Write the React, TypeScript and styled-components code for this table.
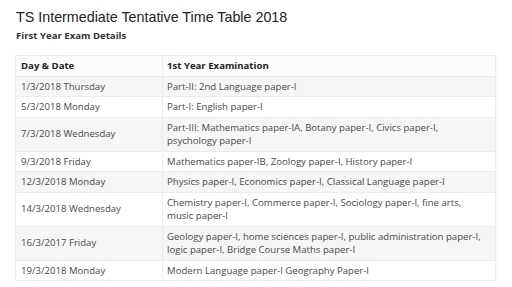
import React from 'react';
import styled, { createGlobalStyle } from 'styled-components';

const GlobalStyle = createGlobalStyle`
  body {
    margin: 0;
    background: #ffffff;
  }
`;

const StyledPage = styled.div`
  padding: 8px 16px 0 15px;
  width: 512px;
  box-sizing: border-box;
`;

const StyledTitle = styled.h1`
  margin: 0 0 0 1px;
  font-family: 'Liberation Sans', Arial, sans-serif;
  font-weight: normal;
  font-size: 14.3px;
  line-height: 18px;
  color: #222222;
`;

const StyledSubtitle = styled.h2`
  margin: 3px 0 0 1px;
  font-family: 'Open Sans', sans-serif;
  font-weight: 700;
  font-size: 9.6px;
  line-height: 13px;
  color: #333333;
`;

const StyledTable = styled.table`
  margin-top: 13px;
  width: 481px;
  border-collapse: collapse;
  font-family: 'Open Sans', sans-serif;
  font-size: 9.6px;
  line-height: 13.5px;
  color: #4a4a4a;
  box-shadow: 1px 1px 2px rgba(0, 0, 0, 0.04);
`;

const StyledRow = styled.tr<{ $striped?: boolean }>`
  background: ${(p) => (p.$striped ? '#f6f6f6' : '#ffffff')};
`;

const StyledHeadCell = styled.th<{ $first?: boolean }>`
  border: 1px solid #ececec;
  padding: 3px 4px 3px ${(p) => (p.$first ? '5px' : '4px')};
  width: ${(p) => (p.$first ? '137px' : 'auto')};
  text-align: left;
  font-weight: 700;
  color: #222222;
  background: #fcfcfc;
`;

const StyledCell = styled.td<{ $first?: boolean }>`
  border: 1px solid #ececec;
  padding: 3px 4px 3px ${(p) => (p.$first ? '5px' : '4px')};
  vertical-align: middle;
  white-space: nowrap;
`;

const rows: { date: string; exam: string[] }[] = [
  { date: '1/3/2018 Thursday', exam: ['Part-II: 2nd Language paper-I'] },
  { date: '5/3/2018 Monday', exam: ['Part-I: English paper-I'] },
  {
    date: '7/3/2018 Wednesday',
    exam: ['Part-III: Mathematics paper-IA, Botany paper-I, Civics paper-I,', 'psychology paper-I'],
  },
  { date: '9/3/2018 Friday', exam: ['Mathematics paper-IB, Zoology paper-I, History paper-I'] },
  { date: '12/3/2018 Monday', exam: ['Physics paper-I, Economics paper-I, Classical Language paper-I'] },
  {
    date: '14/3/2018 Wednesday',
    exam: ['Chemistry paper-I, Commerce paper-I, Sociology paper-I, fine arts,', 'music paper-I'],
  },
  {
    date: '16/3/2017 Friday',
    exam: ['Geology paper-I, home sciences paper-I, public administration paper-I,', 'logic paper-I, Bridge Course Maths paper-I'],
  },
  { date: '19/3/2018 Monday', exam: ['Modern Language paper-I Geography Paper-I'] },
];

const App = () => (
  <StyledPage>
    <GlobalStyle />
    <StyledTitle>TS Intermediate Tentative Time Table 2018</StyledTitle>
    <StyledSubtitle>First Year Exam Details</StyledSubtitle>
    <StyledTable>
      <thead>
        <tr>
          <StyledHeadCell $first>Day &amp; Date</StyledHeadCell>
          <StyledHeadCell>1st Year Examination</StyledHeadCell>
        </tr>
      </thead>
      <tbody>
        {rows.map((row, i) => (
          <StyledRow key={row.date} $striped={i % 2 === 0}>
            <StyledCell $first>{row.date}</StyledCell>
            <StyledCell>
              {row.exam.map((line, j) => (
                <React.Fragment key={line}>
                  {j > 0 && <br />}
                  {line}
                </React.Fragment>
              ))}
            </StyledCell>
          </StyledRow>
        ))}
      </tbody>
    </StyledTable>
  </StyledPage>
);

export default App;
